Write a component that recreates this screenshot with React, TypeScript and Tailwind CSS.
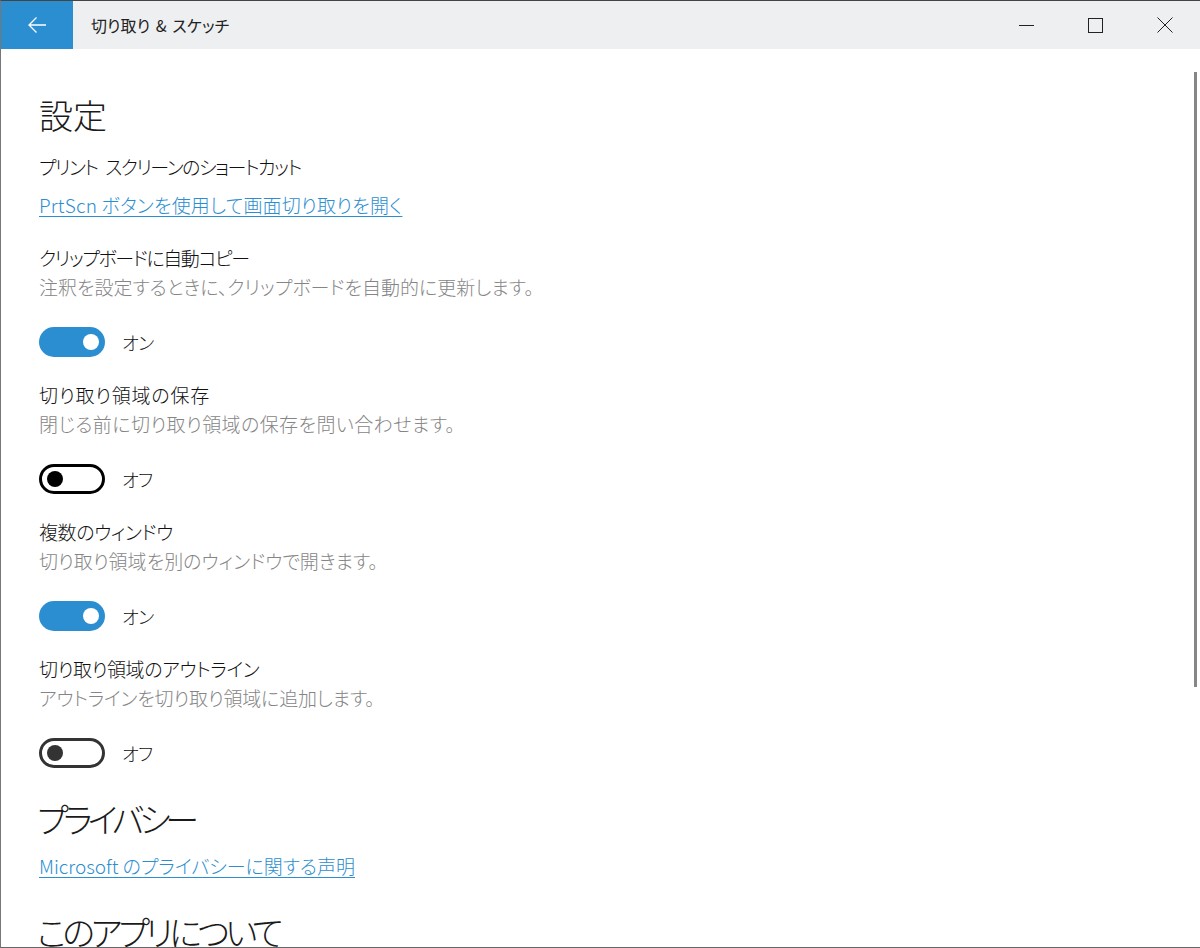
const font = { fontFamily: '"Noto Sans CJK JP", "Liberation Sans", sans-serif' };

function Toggle({ on, dim }: { on: boolean; dim?: boolean }) {
  return (
    <div className="flex items-center h-[30px] mt-[26px]">
      {on ? (
        <div className="w-[66px] h-[30px] rounded-full bg-[#2b8ed0] flex items-center justify-end pr-[6px]">
          <div className="w-[16px] h-[16px] rounded-full bg-white" />
        </div>
      ) : (
        <div className={`w-[66px] h-[30px] rounded-full border-[3px] flex items-center pl-[5px] ${dim ? "border-[#333333]" : "border-black"}`}>
          <div className={`w-[16px] h-[16px] rounded-full ${dim ? "bg-[#333333]" : "bg-black"}`} />
        </div>
      )}
      <span className="ml-[17px] text-[18px] font-light text-[#111111] tracking-[-0.4px] [font-feature-settings:'palt']">{on ? "オン" : "オフ"}</span>
    </div>
  );
}

function Item({ title, desc, on, dim, tt, dt }: { title: string; desc: string; on: boolean; dim?: boolean; tt: string; dt: string }) {
  return (
    <div className="mt-[24px]">
      <div className={`h-[28px] leading-[28px] text-[19px] font-light text-[#111111] [font-feature-settings:'palt'] ${tt}`}>{title}</div>
      <div className={`h-[29px] leading-[29px] text-[19px] font-light text-[#858585] [font-feature-settings:'palt'] ${dt}`}>{desc}</div>
      <Toggle on={on} dim={dim} />
    </div>
  );
}

export default function App() {
  return (
    <div className="relative w-[1200px] h-[948px] overflow-hidden bg-white border-t border-b border-l border-t-[#444444] border-b-[#666666] border-l-[#777777]" style={font}>
      <div className="flex h-[48px] bg-[#eeeff0]">
        <div className="w-[72px] bg-[#2b8ed0] flex items-center justify-center">
          <svg width="20" height="18" viewBox="0 0 20 18" fill="none" stroke="#ffffff" strokeWidth="1.3">
            <path d="M19 9H2M9.5 1.5L2 9l7.5 7.5" />
          </svg>
        </div>
        <div className="flex-1 flex items-center pl-[18px] text-[16px] font-normal text-[#222222] tracking-[0.1px] [word-spacing:2px] [font-feature-settings:'palt']">切り取り &amp; スケッチ</div>
        <div className="flex items-center pr-[1px]">
          <div className="w-[69px] flex justify-center">
            <div className="w-[15px] h-[1px] bg-[#222222]" />
          </div>
          <div className="w-[69px] flex justify-center">
            <div className="w-[15px] h-[15px] border border-[#222222]" />
          </div>
          <div className="w-[69px] flex justify-center">
            <svg width="16" height="16" viewBox="0 0 16 16" fill="none" stroke="#222222" strokeWidth="1"><path d="M.5.5l15 15M15.5.5l-15 15" /></svg>
          </div>
        </div>
      </div>
      <div className="pl-[38px] pt-[42px]">
        <div className="h-[48px] leading-[48px] text-[34px] font-light text-[#1a1a1a]">設定</div>
        <div className="mt-[14px] h-[28px] leading-[28px] text-[19px] font-light text-[#111111] tracking-[-1.5px] [word-spacing:5px] [font-feature-settings:'palt']">プリント スクリーンのショートカット</div>
        <div className="mt-[10px] mb-[25px] h-[28px] leading-[28px] text-[19px] font-light text-[#2b8ed0] tracking-[0.2px] underline underline-offset-[3px] [font-feature-settings:'palt']">PrtScn ボタンを使用して画面切り取りを開く</div>
        <Item title="クリップボードに自動コピー" tt="tracking-[-1.4px]" desc="注釈を設定するときに、クリップボードを自動的に更新します。" dt="tracking-[0px]" on />
        <Item title="切り取り領域の保存" tt="tracking-[0.8px]" desc="閉じる前に切り取り領域の保存を問い合わせます。" dt="tracking-[0.4px]" on={false} />
        <Item title="複数のウィンドウ" tt="tracking-[-0.4px]" desc="切り取り領域を別のウィンドウで開きます。" dt="tracking-[0px]" on />
        <Item title="切り取り領域のアウトライン" tt="tracking-[-0.4px]" desc="アウトラインを切り取り領域に追加します。" dt="tracking-[-0.2px]" on={false} dim />
        <div className="-ml-[2px] mt-[27px] h-[48px] leading-[48px] text-[34px] font-light text-[#1a1a1a] tracking-[-5px] [font-feature-settings:'palt']">プライバシー</div>
        <div className="mt-[9px] h-[28px] leading-[28px] text-[19px] font-light text-[#2b8ed0] underline underline-offset-[3px] [font-feature-settings:'palt']">Microsoft のプライバシーに関する声明</div>
        <div className="-ml-[2px] mt-[28px] h-[48px] leading-[48px] text-[34px] font-light text-[#1a1a1a] tracking-[-4.2px] [font-feature-settings:'palt']">このアプリについて</div>
      </div>
      <div className="absolute right-[3px] top-[71px] w-[3px] h-[615px] bg-[#868686]" />
    </div>
  );
}
